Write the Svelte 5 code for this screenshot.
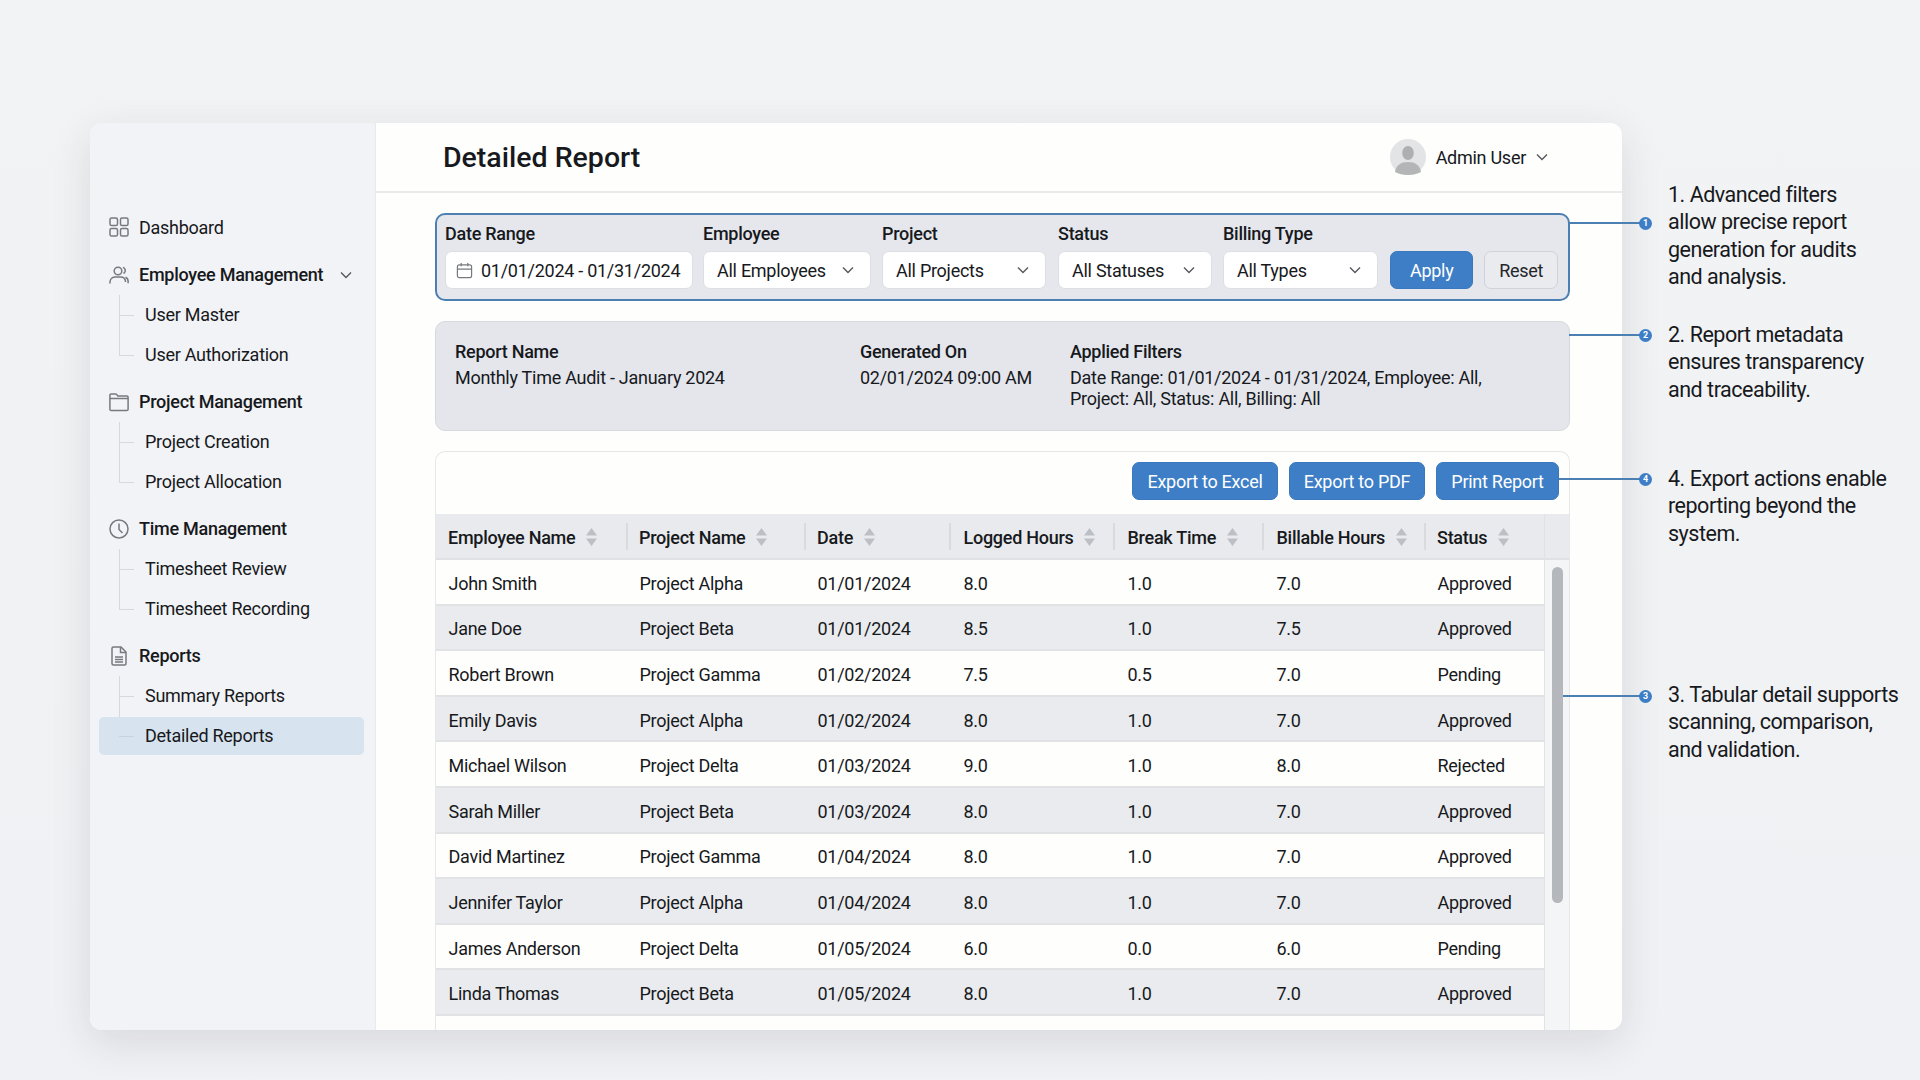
<script>
  const nav = [
    { title: 'Employee Management', icon: 'users', chevron: true, subs: ['User Master', 'User Authorization'] },
    { title: 'Project Management', icon: 'folder', subs: ['Project Creation', 'Project Allocation'] },
    { title: 'Time Management', icon: 'clock', subs: ['Timesheet Review', 'Timesheet Recording'] },
    { title: 'Reports', icon: 'doc', subs: ['Summary Reports', 'Detailed Reports'] }
  ];
  const selects = [
    { label: 'Employee', value: 'All Employees', cls: 'f-emp' },
    { label: 'Project', value: 'All Projects', cls: 'f-proj' },
    { label: 'Status', value: 'All Statuses', cls: 'f-status' },
    { label: 'Billing Type', value: 'All Types', cls: 'f-bill' }
  ];
  const columns = ['Employee Name', 'Project Name', 'Date', 'Logged Hours', 'Break Time', 'Billable Hours', 'Status'];
  const rows = [
    ['John Smith', 'Project Alpha', '01/01/2024', '8.0', '1.0', '7.0', 'Approved'],
    ['Jane Doe', 'Project Beta', '01/01/2024', '8.5', '1.0', '7.5', 'Approved'],
    ['Robert Brown', 'Project Gamma', '01/02/2024', '7.5', '0.5', '7.0', 'Pending'],
    ['Emily Davis', 'Project Alpha', '01/02/2024', '8.0', '1.0', '7.0', 'Approved'],
    ['Michael Wilson', 'Project Delta', '01/03/2024', '9.0', '1.0', '8.0', 'Rejected'],
    ['Sarah Miller', 'Project Beta', '01/03/2024', '8.0', '1.0', '7.0', 'Approved'],
    ['David Martinez', 'Project Gamma', '01/04/2024', '8.0', '1.0', '7.0', 'Approved'],
    ['Jennifer Taylor', 'Project Alpha', '01/04/2024', '8.0', '1.0', '7.0', 'Approved'],
    ['James Anderson', 'Project Delta', '01/05/2024', '6.0', '0.0', '6.0', 'Pending'],
    ['Linda Thomas', 'Project Beta', '01/05/2024', '8.0', '1.0', '7.0', 'Approved'],
    ['', '', '', '', '', '', '']
  ];
  const notes = [
    { n: 1, y: 223, from: 1569, lines: ['1. Advanced filters', 'allow precise report', 'generation for audits', 'and analysis.'], top: 181 },
    { n: 2, y: 335, from: 1569, lines: ['2. Report metadata', 'ensures transparency', 'and traceability.'], top: 321 },
    { n: 4, y: 479, from: 1559, lines: ['4. Export actions enable', 'reporting beyond the', 'system.'], top: 465 },
    { n: 3, y: 696, from: 1563, lines: ['3. Tabular detail supports', 'scanning, comparison,', 'and validation.'], top: 681 }
  ];
</script>

<div class="page">
  <div class="window">
    <aside class="sidebar">
      <div class="title-row">
        <svg class="ico" viewBox="0 0 20 20"><rect x="1" y="1" width="7.5" height="7.5" rx="1.6"/><rect x="11.5" y="1" width="7.5" height="7.5" rx="1.6"/><rect x="1" y="11.5" width="7.5" height="7.5" rx="1.6"/><rect x="11.5" y="11.5" width="7.5" height="7.5" rx="1.6"/></svg>
        <span class="plain">Dashboard</span>
      </div>
      {#each nav as g}
        <section class="group">
          <div class="title-row">
            {#if g.icon === 'users'}
              <svg class="ico" viewBox="0 0 20 20"><circle cx="9" cy="6" r="3.8"/><path d="M1 18.5v-1.5c0-3.2 2.6-5 5.5-5h5c2.900 0 5 1.800 5 5"/><path d="M14 2.400c1.600.6 2.400 2 2.200 3.600-.1 1.100-.8 2-1.700 2.500"/><path d="M16.500 12.200c1.500.6 2.600 2 2.600 4.100v2"/></svg>
            {:else if g.icon === 'folder'}
              <svg class="ico" viewBox="0 0 20 20"><path d="M.9 17.200V3.200c0-.7.5-1.200 1.200-1.200h4.500c.5 0 .9.2 1.200.6l1 1.400h9c.7 0 1.300.5 1.300 1.200v12c0 .7-.6 1.300-1.300 1.300H2.100c-.7 0-1.200-.6-1.200-1.300z"/><path d="M1 6.500h18"/></svg>
            {:else if g.icon === 'clock'}
              <svg class="ico" viewBox="0 0 20 20"><circle cx="10" cy="10" r="9"/><path d="M10 4.500V10.500l3.500 3.500"/></svg>
            {:else}
              <svg class="ico" viewBox="0 0 20 20"><path d="M3 2.500c0-.8.600-1.500 1.400-1.500H12l5 5v11.500c0 .8-.6 1.500-1.400 1.500H4.400C3.600 19 3 18.300 3 17.500z"/><path d="M11.500 1v5.500H17M6 11h8M6 13.500h8M6 16h8"/></svg>
            {/if}
            <strong>{g.title}</strong>
            {#if g.chevron}
              <svg class="chev nav-chev" viewBox="0 0 12 8"><path d="M1 1.500l5 5 5-5"/></svg>
            {/if}
          </div>
          <ul class="subs">
            {#each g.subs as s}
              <li class:active={s === 'Detailed Reports'}>{s}</li>
            {/each}
          </ul>
        </section>
      {/each}
    </aside>

    <main class="main">
      <header class="top">
        <h1>Detailed Report</h1>
        <div class="user">
          <svg class="avatar" viewBox="0 0 36 36"><circle cx="18" cy="18" r="18" fill="#e3e4e5"/><ellipse cx="18" cy="14" rx="5.800" ry="7" fill="#aeafb1"/><path d="M5 33c1-7 6-10 13-10s12 3 13 10c-3.500 2-8 3-13 3s-9.500-1-13-3z" fill="#b4b5b7"/></svg>
          <span>Admin User</span>
          <svg class="chev user-chev" viewBox="0 0 12 8"><path d="M1 1.500l5 5 5-5"/></svg>
        </div>
      </header>

      <div class="content">
        <div class="filters">
          <div class="field f-date">
            <span class="lbl">Date Range</span>
            <div class="control date">
              <svg class="cal" viewBox="0 0 18 18"><rect x="1.500" y="3" width="15" height="13.500" rx="2"/><path d="M1.500 7.500h15M5.500 1v3.500M12.500 1v3.500"/></svg>
              <span>01/01/2024 - 01/31/2024</span>
            </div>
          </div>
          {#each selects as s}
            <div class="field {s.cls}">
              <span class="lbl">{s.label}</span>
              <div class="control sel">
                <span>{s.value}</span>
                <svg class="chev" viewBox="0 0 12 8"><path d="M1 1.500l5 5 5-5"/></svg>
              </div>
            </div>
          {/each}
          <button class="btn apply">Apply</button>
          <button class="btn reset">Reset</button>
        </div>

        <div class="meta">
          <div class="m1"><b>Report Name</b><p>Monthly Time Audit - January 2024</p></div>
          <div class="m2"><b>Generated On</b><p>02/01/2024 09:00 AM</p></div>
          <div class="m3"><b>Applied Filters</b><p>Date Range: 01/01/2024 - 01/31/2024, Employee: All,<br>Project: All, Status: All, Billing: All</p></div>
        </div>

        <div class="card">
          <div class="actions">
            <button class="btn export e1">Export to Excel</button>
            <button class="btn export e2">Export to PDF</button>
            <button class="btn export e3">Print Report</button>
          </div>
          <div class="table">
            <div class="tbl">
              <div class="tr head">
                {#each columns as c}
                  <div class="th">
                    <span>{c}</span>
                    <svg class="sort" viewBox="0 0 11 18"><path d="M5.500 0L11 7.500H0zM5.500 18L0 10.500h11z"/></svg>
                  </div>
                {/each}
              </div>
              {#each rows as r, i}
                <div class="tr" class:alt={i % 2 === 1}>
                  {#each r as v}<div class="td">{v}</div>{/each}
                </div>
              {/each}
            </div>
            <div class="scroll">
              <div class="scroll-head"></div>
              <div class="thumb"></div>
            </div>
          </div>
        </div>
      </div>
    </main>
  </div>

  {#each notes as a}
    <div class="link" style="left:{a.from}px;top:{a.y - 1}px;width:{1640 - a.from}px"></div>
    <div class="dot" style="top:{a.y - 6.500}px">{a.n}</div>
    <p class="note" style="top:{a.top}px">
      {#each a.lines as l}{l}<br>{/each}
    </p>
  {/each}
</div>

<style>
  :global(body) {
    margin: 0;
    background: #f1f2f4;
    font-family: Roboto, "Noto Sans", sans-serif;
    color: #17191c;
  }
  .page {
    position: relative;
    width: 1920px;
    height: 1080px;
    padding: 123px 298px 50px 90px;
    box-sizing: border-box;
    overflow: hidden;
    background: linear-gradient(180deg, #f2f3f4, #f0f1f4);
    letter-spacing: -0.27px;
  }
  .window {
    display: flex;
    height: 907px;
    border-radius: 12px;
    overflow: hidden;
    background: #fefefc;
    box-shadow: 0 12px 40px rgba(40, 44, 60, 0.12);
  }

  /* sidebar */
  .sidebar {
    width: 286px;
    flex: none;
    box-sizing: border-box;
    padding: 86px 11px 0 9px;
    background: #f2f3f6;
    border-right: 1px solid #e8e9ec;
    font-size: 18px;
  }
  .title-row {
    display: flex;
    align-items: center;
    height: 36px;
    padding-left: 10px;
  }
  .ico {
    width: 20px;
    height: 20px;
    flex: none;
    margin-right: 10px;
    fill: none;
    stroke: #77797f;
    stroke-width: 1.5;
  }
  .title-row strong { font-weight: 500; }
  .chev {
    fill: none;
    stroke: #55585e;
    stroke-width: 1.400;
    width: 12px;
    height: 8px;
    flex: none;
  }
  .nav-chev { margin-left: 17px; }
  .group { margin-top: 11.500px; }
  .group + .group { margin-top: 9px; }
  .subs {
    list-style: none;
    position: relative;
    margin: 2px 0 0;
    padding: 0;
  }
  .subs::before {
    content: "";
    position: absolute;
    left: 19.500px;
    top: 0;
    bottom: 20px;
    width: 1.500px;
    background: #d6d8dc;
  }
  .subs li {
    position: relative;
    height: 40px;
    line-height: 40px;
    padding-left: 46px;
  }
  .subs li::before {
    content: "";
    position: absolute;
    left: 19.500px;
    top: 50%;
    width: 15px;
    height: 1.500px;
    background: #d6d8dc;
  }
  .subs li.active {
    height: 38px;
    line-height: 38px;
    margin-top: 1px;
    background: #d7e3ee;
    border-radius: 5px;
  }
  .subs li.active::before { background: #c8d3de; }

  /* main */
  .main {
    flex: 1;
    min-width: 0;
    display: flex;
    flex-direction: column;
  }
  .top {
    flex: none;
    height: 70px;
    box-sizing: border-box;
    display: flex;
    align-items: center;
    justify-content: space-between;
    padding: 0 74px 0 67px;
    border-bottom: 2px solid #e9eaea;
  }
  h1 {
    margin: 0;
    font-size: 28.500px;
    font-weight: 500;
    letter-spacing: 0;
  }
  .user {
    display: flex;
    align-items: center;
    font-size: 18px;
  }
  .avatar { width: 36px; height: 36px; margin-right: 10px; }
  .user-chev { margin-left: 10px; }
  .content {
    flex: 1;
    min-height: 0;
    padding: 20px 52px 0 59px;
    font-size: 18px;
  }

  .filters {
    box-sizing: border-box;
    height: 88px;
    display: flex;
    align-items: flex-end;
    padding: 0 10px 10px 8px;
    border: 2px solid #4c80b2;
    border-radius: 10px;
    background: #e5e7ed;
  }
  .field { display: flex; flex-direction: column; flex: none; }
  .lbl {
    font-weight: 500;
    line-height: 22px;
    margin-bottom: 6px;
  }
  .control {
    box-sizing: border-box;
    height: 38px;
    display: flex;
    align-items: center;
    border-radius: 7px;
    background: #fff;
    border: 1.500px solid #dcdfe3;
  }
  .f-date { width: 248px; margin-right: 10px; }
  .f-emp { width: 168px; margin-right: 11px; }
  .f-proj { width: 164px; margin-right: 12px; }
  .f-status { width: 154px; margin-right: 11px; }
  .f-bill { width: 155px; margin-right: 12px; }
  .date { padding-left: 10px; gap: 8px; }
  .cal { width: 17px; height: 17px; fill: none; stroke: #77797f; stroke-width: 1.300; flex: none; }
  .sel { padding: 0 16px 0 13px; justify-content: space-between; }
  .btn {
    font: inherit;
    font-size: 18px;
    letter-spacing: inherit;
    height: 38px;
    padding: 0;
    border-radius: 7px;
    cursor: pointer;
  }
  .apply {
    width: 84px;
    margin-right: 11px;
    color: #fff;
    background: #3d7ec6;
    border: 1px solid #3a78bd;
  }
  .reset {
    width: 74px;
    color: #24262a;
    background: #e9ebef;
    border: 1.500px solid #cfd2d7;
  }

  .meta {
    box-sizing: border-box;
    height: 110px;
    margin-top: 20px;
    display: flex;
    padding-top: 19px;
    border: 1.500px solid #d6d9de;
    border-radius: 10px;
    background: #e4e6ec;
    line-height: 21px;
  }
  .meta b { font-weight: 500; display: block; }
  .meta p { margin: 5px 0 0; }
  .m1 { width: 405px; margin-left: 19px; }
  .m2 { width: 210px; }

  .card {
    margin-top: 20px;
    height: 640px;
    box-sizing: border-box;
    border: 1.500px solid #e6e7e8;
    border-bottom: 0;
    border-radius: 10px 10px 0 0;
    overflow: hidden;
    display: flex;
    flex-direction: column;
  }
  .actions {
    flex: none;
    height: 62px;
    box-sizing: border-box;
    display: flex;
    justify-content: flex-end;
    padding: 10px 10px 0 0;
    gap: 11px;
  }
  .export {
    color: #fff;
    background: #3d7ec6;
    border: 1px solid #3a78bd;
  }
  .e1 { width: 146px; }
  .e2 { width: 136px; }
  .e3 { width: 123px; }
  .table { display: flex; flex: 1; min-height: 0; }
  .tbl { width: 1108px; flex: none; }
  .tr {
    display: grid;
    grid-template-columns: 190px 178px 145px 164px 149px 162px 120px;
    height: 45.600px;
    background: #fefefc;
    border-bottom: 2px solid #e0e2e4;
    box-sizing: border-box;
  }
  .tr.alt { background: #e9ebee; }
  .tr.head {
    height: 46px;
    background: #e8eaee;
    border-bottom: 2px solid #dfe1e4;
  }
  .th {
    position: relative;
    display: flex;
    align-items: center;
    padding: 2px 0 0 13px;
    font-weight: 500;
  }
  .th + .th::before {
    content: "";
    position: absolute;
    left: 0;
    top: 9px;
    bottom: 8px;
    width: 1.500px;
    background: #d8dade;
  }
  .th:first-child { padding-left: 12px; }
  .sort { width: 11px; height: 18px; margin-left: 11px; fill: #bcbfc4; flex: none; }
  .td {
    display: flex;
    align-items: center;
    padding: 3px 0 0 13.500px;
  }
  .td:first-child { padding-left: 12.500px; }
  .th:nth-child(n+4):nth-child(-n+6),
  .td:nth-child(n+4):nth-child(-n+6) { padding-left: 14.500px; }
  .scroll {
    flex: 1;
    position: relative;
    background: #f4f5f7;
    border-left: 1.500px solid #e0e2e4;
  }
  .scroll-head {
    height: 46px;
    background: #e8eaee;
    border-bottom: 2px solid #dfe1e4;
    box-sizing: border-box;
  }
  .thumb {
    width: 11px;
    height: 336px;
    margin: 7px 0 0 6.500px;
    border-radius: 6px;
    background: #b4b7bc;
  }

  /* annotations */
  .link {
    position: absolute;
    height: 2px;
    background: #4c80b2;
  }
  .dot {
    position: absolute;
    left: 1639px;
    width: 13px;
    height: 13px;
    border-radius: 50%;
    background: #3d7ec6;
    color: #fff;
    font-size: 9px;
    font-weight: 700;
    line-height: 13px;
    text-align: center;
    letter-spacing: 0;
  }
  .note {
    position: absolute;
    left: 1668px;
    margin: 0;
    font-size: 21.500px;
    line-height: 27.300px;
    letter-spacing: -0.48px;
    white-space: nowrap;
  }
</style>
